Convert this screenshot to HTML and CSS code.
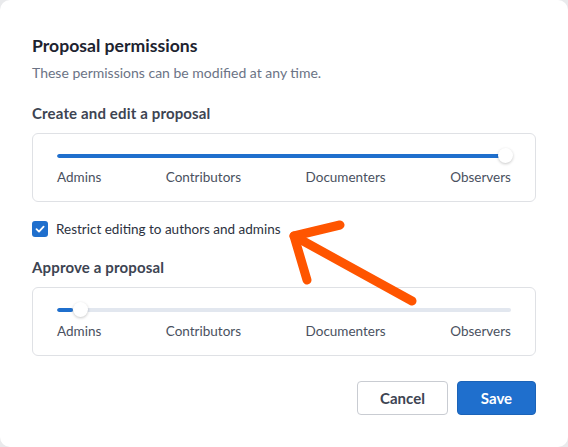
FILE: index.html
```
<!DOCTYPE html>
<html lang="en">
<head>
<meta charset="utf-8">
<title>Proposal permissions</title>
<link rel="stylesheet" href="styles.css">
</head>
<body>
<div class="modal">
  <h2 class="title">Proposal permissions</h2>
  <p class="subtitle">These permissions can be modified at any time.</p>

  <div class="section-label">Create and edit a proposal</div>
  <div class="slider-box">
    <div class="track-row">
      <div class="track">
        <div class="fill" style="width: 100%"></div>
      </div>
      <div class="thumb" style="left: 441px"></div>
    </div>
    <div class="labels">
      <span>Admins</span><span>Contributors</span><span>Documenters</span><span>Observers</span>
    </div>
  </div>

  <label class="check-row">
    <span class="checkbox">
      <svg viewBox="0 0 16 16" width="16" height="16"><path d="M4.5 8.2 L7 10.6 L11.6 5.6" fill="none" stroke="#fff" stroke-width="1.8" stroke-linecap="round" stroke-linejoin="round"/></svg>
    </span>
    <span class="check-text">Restrict editing to authors and admins</span>
  </label>

  <div class="section-label approve">Approve a proposal</div>
  <div class="slider-box">
    <div class="track-row">
      <div class="track">
        <div class="fill" style="width: 16px"></div>
      </div>
      <div class="thumb" style="left: 16px"></div>
    </div>
    <div class="labels">
      <span>Admins</span><span>Contributors</span><span>Documenters</span><span>Observers</span>
    </div>
  </div>

  <div class="actions">
    <button class="btn btn-cancel">Cancel</button>
    <button class="btn btn-save">Save</button>
  </div>

  <svg class="arrow" width="568" height="447" viewBox="0 0 568 447">
    <g fill="none" stroke="#ff5500" stroke-width="9" stroke-linecap="round" stroke-linejoin="round">
      <path d="M412 301 L294 236"/>
      <path d="M340 225 L294 236 L307 280"/>
    </g>
  </svg>
</div>
</body>
</html>
```
FILE: styles.css
```
* { box-sizing: border-box; }
html, body {
  margin: 0;
  padding: 0;
  background: #e9eaec;
}
body {
  font-family: "Lato", "Noto Sans", sans-serif;
}
.modal {
  position: relative;
  width: 568px;
  height: 447px;
  background: #ffffff;
  border-radius: 10px;
  padding: 34px 32px 32px;
  display: flex;
  flex-direction: column;
}
.title {
  margin: 0;
  font-size: 17.6px;
  line-height: 24px;
  font-weight: 700;
  color: #1d2330;
}
.subtitle {
  margin: 4px 0 0;
  font-size: 14px;
  line-height: 22px;
  color: #6b7385;
}
.section-label {
  margin-top: 18px;
  font-size: 15px;
  letter-spacing: 0.15px;
  line-height: 22px;
  font-weight: 700;
  color: #3d4452;
}
.section-label.approve {
  margin-top: 19px;
}
.slider-box {
  margin-top: 9px;
  border: 1px solid #dfe1e5;
  border-radius: 6px;
  padding: 15px 24px 14px;
  height: 69px;
}
.track-row {
  position: relative;
  height: 14px;
  display: flex;
  align-items: center;
}
.track {
  width: 100%;
  height: 4px;
  border-radius: 2px;
  background: #e2e7ef;
  overflow: hidden;
}
.fill {
  height: 100%;
  background: #1f6fcd;
  border-radius: 2px;
}
.thumb {
  position: absolute;
  top: 0;
  width: 15px;
  height: 15px;
  margin-top: -1px;
  border-radius: 50%;
  background: #ffffff;
  box-shadow: 0 1px 3px rgba(0, 0, 0, 0.22);
}
.labels {
  margin-top: 4px;
  display: flex;
  justify-content: space-between;
  font-size: 13.5px;
  line-height: 20px;
  color: #4a5160;
}
.check-row {
  margin-top: 19px;
  display: flex;
  align-items: center;
  gap: 8px;
  height: 16px;
}
.checkbox {
  width: 16px;
  height: 16px;
  border-radius: 3px;
  background: #1f6fcd;
  display: flex;
}
.check-text {
  font-size: 13.5px;
  line-height: 20px;
  color: #2c3240;
}
.actions {
  margin-top: 25px;
  display: flex;
  justify-content: flex-end;
  gap: 9px;
}
.btn {
  height: 34px;
  border-radius: 4px;
  font-family: "Lato", "Noto Sans", sans-serif;
  font-size: 15px;
  font-weight: 700;
  padding: 0;
}
.btn-cancel {
  width: 91px;
  background: #ffffff;
  border: 1px solid #c9ccd2;
  color: #3d4452;
}
.btn-save {
  width: 79px;
  background: #1f6fcd;
  border: 1px solid #1b63b8;
  color: #ffffff;
}
.arrow {
  position: absolute;
  left: 0;
  top: 0;
  pointer-events: none;
}
```
